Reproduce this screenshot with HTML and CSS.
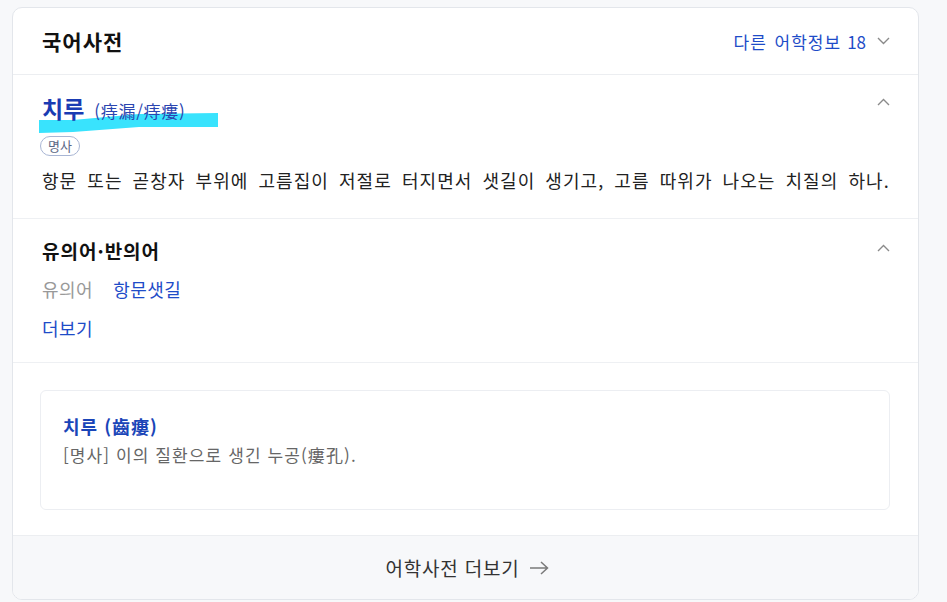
FILE: index.html
```html
<!DOCTYPE html>
<html lang="ko">
<head>
<meta charset="utf-8">
<title>국어사전</title>
<link rel="stylesheet" href="styles.css">
</head>
<body>
<div class="card">
  <div class="header">
    <h2 class="title">국어사전</h2>
    <a class="more-info">다른 어학정보<span class="num">18</span>
      <svg class="chev" width="13" height="8" viewBox="0 0 13 8"><polyline points="1,1 6.5,6.5 12,1" fill="none" stroke="#8a8a8a" stroke-width="1.4"/></svg>
    </a>
  </div>

  <div class="entry">
    <div class="entry-top">
      <div class="headword-wrap">
        <svg class="hilite" width="179" height="21" viewBox="0 0 179 21"><polygon points="0,7 34,7 100,1 179,0 179,14 100,14 34,19 0,20" fill="#39e3fd"/></svg>
        <span class="headword">치루</span>
        <span class="hanja">(痔漏/痔瘻)</span>
      </div>
      <svg class="chev-up" width="13" height="8" viewBox="0 0 13 8"><polyline points="1,7 6.5,1.5 12,7" fill="none" stroke="#8a8a8a" stroke-width="1.4"/></svg>
    </div>
    <span class="badge">명사</span>
    <p class="def">항문 또는 곧창자 부위에 고름집이 저절로 터지면서 샛길이 생기고, 고름 따위가 나오는 치질의 하나.</p>
  </div>

  <div class="syn">
    <div class="syn-top">
      <h3 class="syn-title">유의어·반의어</h3>
      <svg class="chev-up2" width="13" height="8" viewBox="0 0 13 8"><polyline points="1,7 6.5,1.5 12,7" fill="none" stroke="#8a8a8a" stroke-width="1.4"/></svg>
    </div>
    <div class="syn-row"><span class="syn-label">유의어</span><a class="syn-link">항문샛길</a></div>
    <a class="syn-more">더보기</a>
  </div>

  <div class="related">
    <div class="rel-card">
      <div class="rel-word">치루 (齒瘻)</div>
      <div class="rel-def">[명사] 이의 질환으로 생긴 누공(瘻孔).</div>
    </div>
  </div>

  <div class="footer">
    <a class="footer-link">어학사전 더보기
      <svg class="arrow" width="20" height="14" viewBox="0 0 20 14"><path d="M1 7 H18 M12 1 L18.5 7 L12 13" fill="none" stroke="#7a7a7a" stroke-width="1.5"/></svg>
    </a>
  </div>
</div>
</body>
</html>
```
FILE: styles.css
```css
* { box-sizing: border-box; }
html, body { margin: 0; padding: 0; }
body {
  background: #f7f8fa;
  font-family: "Noto Sans CJK KR", "Noto Sans", sans-serif;
  color: #222;
}
a { text-decoration: none; cursor: pointer; }
.card {
  margin: 7px 0 0 12px;
  width: 907px;
  background: #fff;
  border: 1px solid #e3e6eb;
  border-radius: 10px;
  overflow: hidden;
}
.header {
  height: 67px;
  padding: 0 28px 0 29px;
  display: flex;
  align-items: center;
  justify-content: space-between;
  border-bottom: 1px solid #eceef1;
}
.title {
  margin: 0;
  font-size: 21px;
  font-weight: 700;
  color: #111;
  letter-spacing: 1px;
}
.more-info {
  display: flex;
  align-items: center;
  font-size: 17px;
  color: #1e4cc8;
  letter-spacing: 1px;
  word-spacing: 2px;
}
.more-info .num { margin-left: 6px; letter-spacing: 0; }
.chev { margin-left: 11px; }

.entry {
  padding: 18px 20px 24px 29px;
  border-bottom: 1px solid #eef0f3;
}
.entry-top {
  display: flex;
  justify-content: space-between;
  align-items: flex-start;
  margin-right: 8px;
}
.headword-wrap {
  position: relative;
  height: 30px;
  display: flex;
  align-items: baseline;
}
.hilite {
  position: absolute;
  left: -3px;
  top: 20px;
  z-index: 0;
}
.headword {
  position: relative;
  z-index: 1;
  font-size: 23px;
  font-weight: 700;
  color: #1a3bb3;
  line-height: 30px;
}
.hanja {
  position: relative;
  z-index: 1;
  margin-left: 10px;
  font-size: 17px;
  letter-spacing: 0.7px;
  color: #2a45b0;
}
.chev-up { margin-top: 5px; }
.badge {
  display: inline-block;
  margin-top: 13px;
  height: 20px;
  padding: 0 7px;
  border: 1px solid #a9b6d4;
  border-radius: 10px;
  font-size: 13px;
  line-height: 18px;
  color: #5b6785;
  margin-left: -2px;
}
.def {
  margin: 10px 0 0;
  font-size: 18px;
  line-height: 28px;
  color: #222;
  word-spacing: 4px;
  letter-spacing: 1.05px;
  white-space: nowrap;
}

.syn {
  padding: 19px 28px 21px 29px;
  border-bottom: 1px solid #eef0f3;
}
.syn-top {
  display: flex;
  justify-content: space-between;
  align-items: center;
}
.syn-title {
  margin: 0;
  font-size: 19px;
  font-weight: 700;
  line-height: 26px;
  color: #111;
  letter-spacing: 1px;
}
.chev-up2 { margin-top: -6px; }
.syn-row {
  margin-top: 12px;
  display: flex;
  gap: 20px;
  font-size: 18px;
  line-height: 26px;
  letter-spacing: 0.5px;
}
.syn-label { color: #999; }
.syn-link { color: #1e4cc8; }
.syn-more {
  display: block;
  margin-top: 13px;
  font-size: 18px;
  line-height: 26px;
  letter-spacing: 0.5px;
  color: #1e4cc8;
}

.related {
  padding: 27px 28px 25px 27px;
}
.rel-card {
  height: 120px;
  padding: 23px 22px 0;
  border: 1px solid #eceef2;
  border-radius: 6px;
}
.rel-word {
  font-size: 18px;
  font-weight: 700;
  line-height: 24px;
  letter-spacing: 1px;
  color: #1a45b8;
}
.rel-def {
  margin-top: 5px;
  font-size: 17px;
  line-height: 24px;
  letter-spacing: 1.1px;
  color: #666;
}

.footer {
  height: 64px;
  background: #f7f8fa;
  border-top: 1px solid #eceef1;
  display: flex;
  align-items: center;
  justify-content: center;
}
.footer-link {
  display: flex;
  align-items: center;
  font-size: 19px;
  letter-spacing: 0.8px;
  color: #333;
  margin-left: 3px;
}
.arrow { margin-left: 9px; }
```
